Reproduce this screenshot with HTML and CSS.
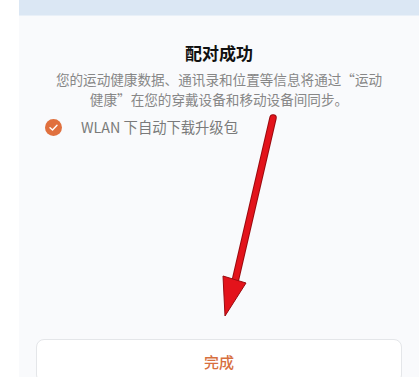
FILE: index.html
```html
<!DOCTYPE html>
<html lang="zh-CN">
<head>
<meta charset="utf-8">
<link rel="stylesheet" href="styles.css">
</head>
<body>
<div class="page">
  <div class="gutter"></div>
  <div class="panel">
    <div class="topband"></div>
    <div class="content">
      <h1 class="title">配对成功</h1>
      <p class="desc">您的运动健康数据、通讯录和位置等信息将通过“运动<br>健康”在您的穿戴设备和移动设备间同步。</p>
      <div class="option">
        <span class="check">
          <svg viewBox="0 0 17 17" width="17" height="17"><circle cx="8.5" cy="8.5" r="8.5" fill="#e0703e"/><path d="M5 8.7 L7.5 11 L12 6.2" fill="none" stroke="#fff" stroke-width="1.4" stroke-linecap="round" stroke-linejoin="round"/></svg>
        </span>
        <span class="option-label">WLAN 下自动下载升级包</span>
      </div>
      <button class="done">完成</button>
    </div>
  </div>
  <svg class="arrow" viewBox="0 0 419 377" width="419" height="377">
    <path d="M273 118 L234 286" stroke="#9a0a0f" stroke-width="7.5" stroke-linecap="round" fill="none"/>
    <path d="M273 118 L234 286" stroke="#e3131b" stroke-width="5.5" stroke-linecap="round" fill="none"/>
    <polygon points="223,276 246,283 225,316" fill="#e3131b" stroke="#9a0a0f" stroke-width="1" stroke-linejoin="round"/>
  </svg>
</div>
</body>
</html>
```
FILE: styles.css
```css
* { box-sizing: border-box; }
html, body { margin: 0; padding: 0; background: #ffffff; }
body {
  font-family: "Noto Sans CJK SC", "Noto Sans", sans-serif;
  width: 419px;
  height: 377px;
  overflow: hidden;
}
.page {
  position: relative;
  display: flex;
  width: 419px;
  height: 377px;
  overflow: hidden;
}
.gutter {
  width: 19px;
  flex: none;
  background: #ffffff;
}
.panel {
  flex: 1;
  display: flex;
  flex-direction: column;
  background: #f9fafc;
}
.topband {
  height: 16px;
  flex: none;
  background: #dbe7f4;
  border-bottom: 1px solid #e9f0f8;
}
.content {
  display: flex;
  flex-direction: column;
  padding-top: 25px;
}
.title {
  margin: 0;
  font-size: 17px;
  font-weight: 700;
  line-height: 24px;
  color: #111111;
  text-align: center;
}
.desc {
  margin: 4px 0 0;
  font-size: 13.6px;
  line-height: 20px;
  color: #878787;
  text-align: center;
}
.option {
  display: flex;
  align-items: center;
  height: 20px;
  margin-top: 8px;
  padding-left: 26px;
  gap: 19px;
}
.check {
  display: flex;
  width: 17px;
  height: 17px;
}
.option-label {
  font-size: 14.3px;
  color: #7a7a7a;
  line-height: 20px;
}
.done {
  margin: 202px 17px 0 17px;
  height: 44px;
  background: #ffffff;
  border: 1px solid #e4e6e9;
  border-radius: 8px;
  font-family: inherit;
  font-size: 15px;
  font-weight: 500;
  color: #d7703f;
  padding: 0;
}
.arrow {
  position: absolute;
  left: 0;
  top: 0;
  pointer-events: none;
}
```
